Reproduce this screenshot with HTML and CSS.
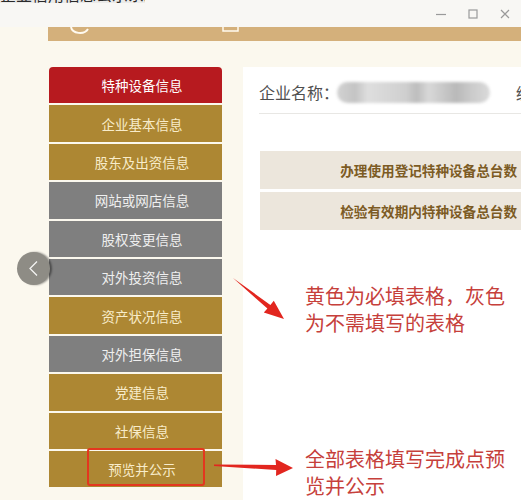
FILE: index.html
```html
<!DOCTYPE html>
<html lang="zh-CN">
<head>
<meta charset="utf-8">
<title>特种设备信息</title>
<link rel="stylesheet" href="styles.css">
</head>
<body>
<div class="titlebar">
  <div class="tab-text">企业信用信息公示系统</div>
  <div class="winctl">
    <span class="ctl"><svg width="12" height="12" viewBox="0 0 12 12"><path d="M1 6.5H11" stroke="#9a9a9a" stroke-width="1.2"/></svg></span>
    <span class="ctl"><svg width="12" height="12" viewBox="0 0 12 12"><rect x="2" y="2" width="8" height="8" fill="none" stroke="#9a9a9a" stroke-width="1.2"/></svg></span>
    <span class="ctl"><svg width="12" height="12" viewBox="0 0 12 12"><path d="M2 2L10 10M10 2L2 10" stroke="#9a9a9a" stroke-width="1.2"/></svg></span>
  </div>
</div>
<div class="band">
  <svg class="band-icons" width="473" height="14" viewBox="0 0 473 14">
    <path d="M23 0 A9 7 0 0 0 40 2" fill="none" stroke="#fffaf0" stroke-width="2"/>
    <path d="M175 -2 V4 H190 V-2" fill="none" stroke="#fffaf0" stroke-width="1.5"/>
  </svg>
</div>
<div class="main">
  <nav class="sidebar">
    <div class="item red">特种设备信息</div>
    <div class="item gold">企业基本信息</div>
    <div class="item gold">股东及出资信息</div>
    <div class="item gray">网站或网店信息</div>
    <div class="item gray">股权变更信息</div>
    <div class="item gray">对外投资信息</div>
    <div class="item gold">资产状况信息</div>
    <div class="item gray">对外担保信息</div>
    <div class="item gold">党建信息</div>
    <div class="item gold">社保信息</div>
    <div class="item gold last">预览并公示<span class="highlight"></span></div>
  </nav>
  <section class="panel">
    <div class="company">
      <span class="label">企业名称：</span>
      <span class="blur"></span>
      <span class="cut">统一社会信用代码</span>
    </div>
    <div class="rows">
      <div class="row">办理使用登记特种设备总台数</div>
      <div class="row">检验有效期内特种设备总台数</div>
    </div>
    <p class="note note1">黄色为必填表格，灰色<br>为不需填写的表格</p>
    <p class="note note2">全部表格填写完成点预<br>览并公示</p>
  </section>
</div>
<div class="back">
  <svg width="33" height="33" viewBox="0 0 33 33"><path d="M20 9.5L13 16.5L20 23.5" fill="none" stroke="#f4f4f2" stroke-width="1.3"/></svg>
</div>
<svg class="arrows" width="521" height="500" viewBox="0 0 521 500">
  <polygon points="233,278 270.4,305 273.8,300.8 284,319 263.8,312.6 267.4,308.6" fill="#e2261f"/>
  <polygon points="214,464.5 276,465 275.5,459 293,468 276,476 276.2,470 214,466" fill="#e2261f"/>
</svg>
</body>
</html>
```

FILE: styles.css
```css
html, body {
  margin: 0;
  padding: 0;
}
body {
  width: 521px;
  height: 500px;
  overflow: hidden;
  background: #fbf8ee;
  font-family: "Noto Sans CJK SC", "Noto Sans", sans-serif;
  position: relative;
}
.titlebar {
  height: 27px;
  display: flex;
  align-items: flex-start;
  background: #f8f7f4;
  overflow: hidden;
}
.tab-text {
  margin-top: -14px;
  width: 145px;
  flex: none;
  font-size: 16px;
  line-height: 17px;
  color: #2a2a2a;
  background: #ebebe9;
  white-space: nowrap;
  overflow: hidden;
}
.winctl {
  margin-left: auto;
  display: flex;
}
.ctl {
  width: 32px;
  height: 27px;
  display: flex;
  align-items: center;
  justify-content: center;
}
.ctl svg { display: block; }
.band {
  margin-left: 48px;
  height: 14px;
  background: #d4b07b;
  overflow: hidden;
}
.band-icons { display: block; }
.main {
  display: flex;
  align-items: flex-start;
  padding-top: 26px;
}
.sidebar {
  margin-left: 49px;
  width: 173px;
  flex: none;
  display: flex;
  flex-direction: column;
  gap: 2px;
}
.item {
  height: 36.4px;
  display: flex;
  align-items: center;
  justify-content: center;
  padding-left: 13px;
  font-size: 13.5px;
  white-space: nowrap;
  position: relative;
}
.red {
  background: #b71a1f;
  color: #ffffff;
  border-radius: 4px 4px 0 0;
}
.gold {
  background: #ad8733;
  color: #f8ecca;
}
.gray {
  background: #7f7f7f;
  color: #efefef;
}
.highlight {
  position: absolute;
  left: 38px;
  top: -3px;
  width: 114px;
  height: 34px;
  border: 2px solid #e3371f;
  border-radius: 3px;
}
.panel {
  margin-left: 21px;
  flex: 1;
  min-width: 0;
  height: 433px;
  background: #ffffff;
  position: relative;
  overflow: hidden;
}
.company {
  margin-left: 16px;
  height: 42px;
  padding-top: 4px;
  border-bottom: 1px solid #e8e7e4;
  display: flex;
  align-items: center;
  white-space: nowrap;
  overflow: hidden;
}
.label {
  font-size: 16px;
  color: #4f4f4f;
  flex: none;
}
.blur {
  margin-left: -2px;
  width: 153px;
  height: 21px;
  flex: none;
  border-radius: 11px;
  background: linear-gradient(90deg, #d2d2d2 0%, #c4c4c4 12%, #dedede 20%, #cfcfcf 45%, #bdbdbd 52%, #d8d8d8 60%, #b9b9b9 78%, #cbcbcb 88%, #dadada 100%);
  filter: blur(1.5px);
}
.cut {
  margin-left: 26px;
  font-size: 15px;
  color: #555;
  flex: none;
}
.rows {
  margin-top: 37px;
  margin-left: 17px;
  display: flex;
  flex-direction: column;
  gap: 3px;
}
.row {
  height: 38px;
  background: #ece6dc;
  display: flex;
  align-items: center;
  justify-content: flex-end;
  padding-right: 4px;
  font-size: 13.6px;
  font-weight: bold;
  color: #7c5b24;
  white-space: nowrap;
}
.note {
  position: absolute;
  left: 62px;
  margin: 0;
  font-size: 20px;
  line-height: 27px;
  color: #c6403b;
  white-space: nowrap;
}
.note1 { top: 215px; }
.note2 { top: 378px; }
.back {
  position: absolute;
  left: 17px;
  top: 252px;
  width: 33px;
  height: 33px;
  border-radius: 50%;
  background: #8e8c85;
  box-shadow: 2px 0 2px rgba(0, 0, 0, 0.4);
}
.back svg { display: block; }
.arrows {
  position: absolute;
  left: 0;
  top: 0;
  pointer-events: none;
}
```
